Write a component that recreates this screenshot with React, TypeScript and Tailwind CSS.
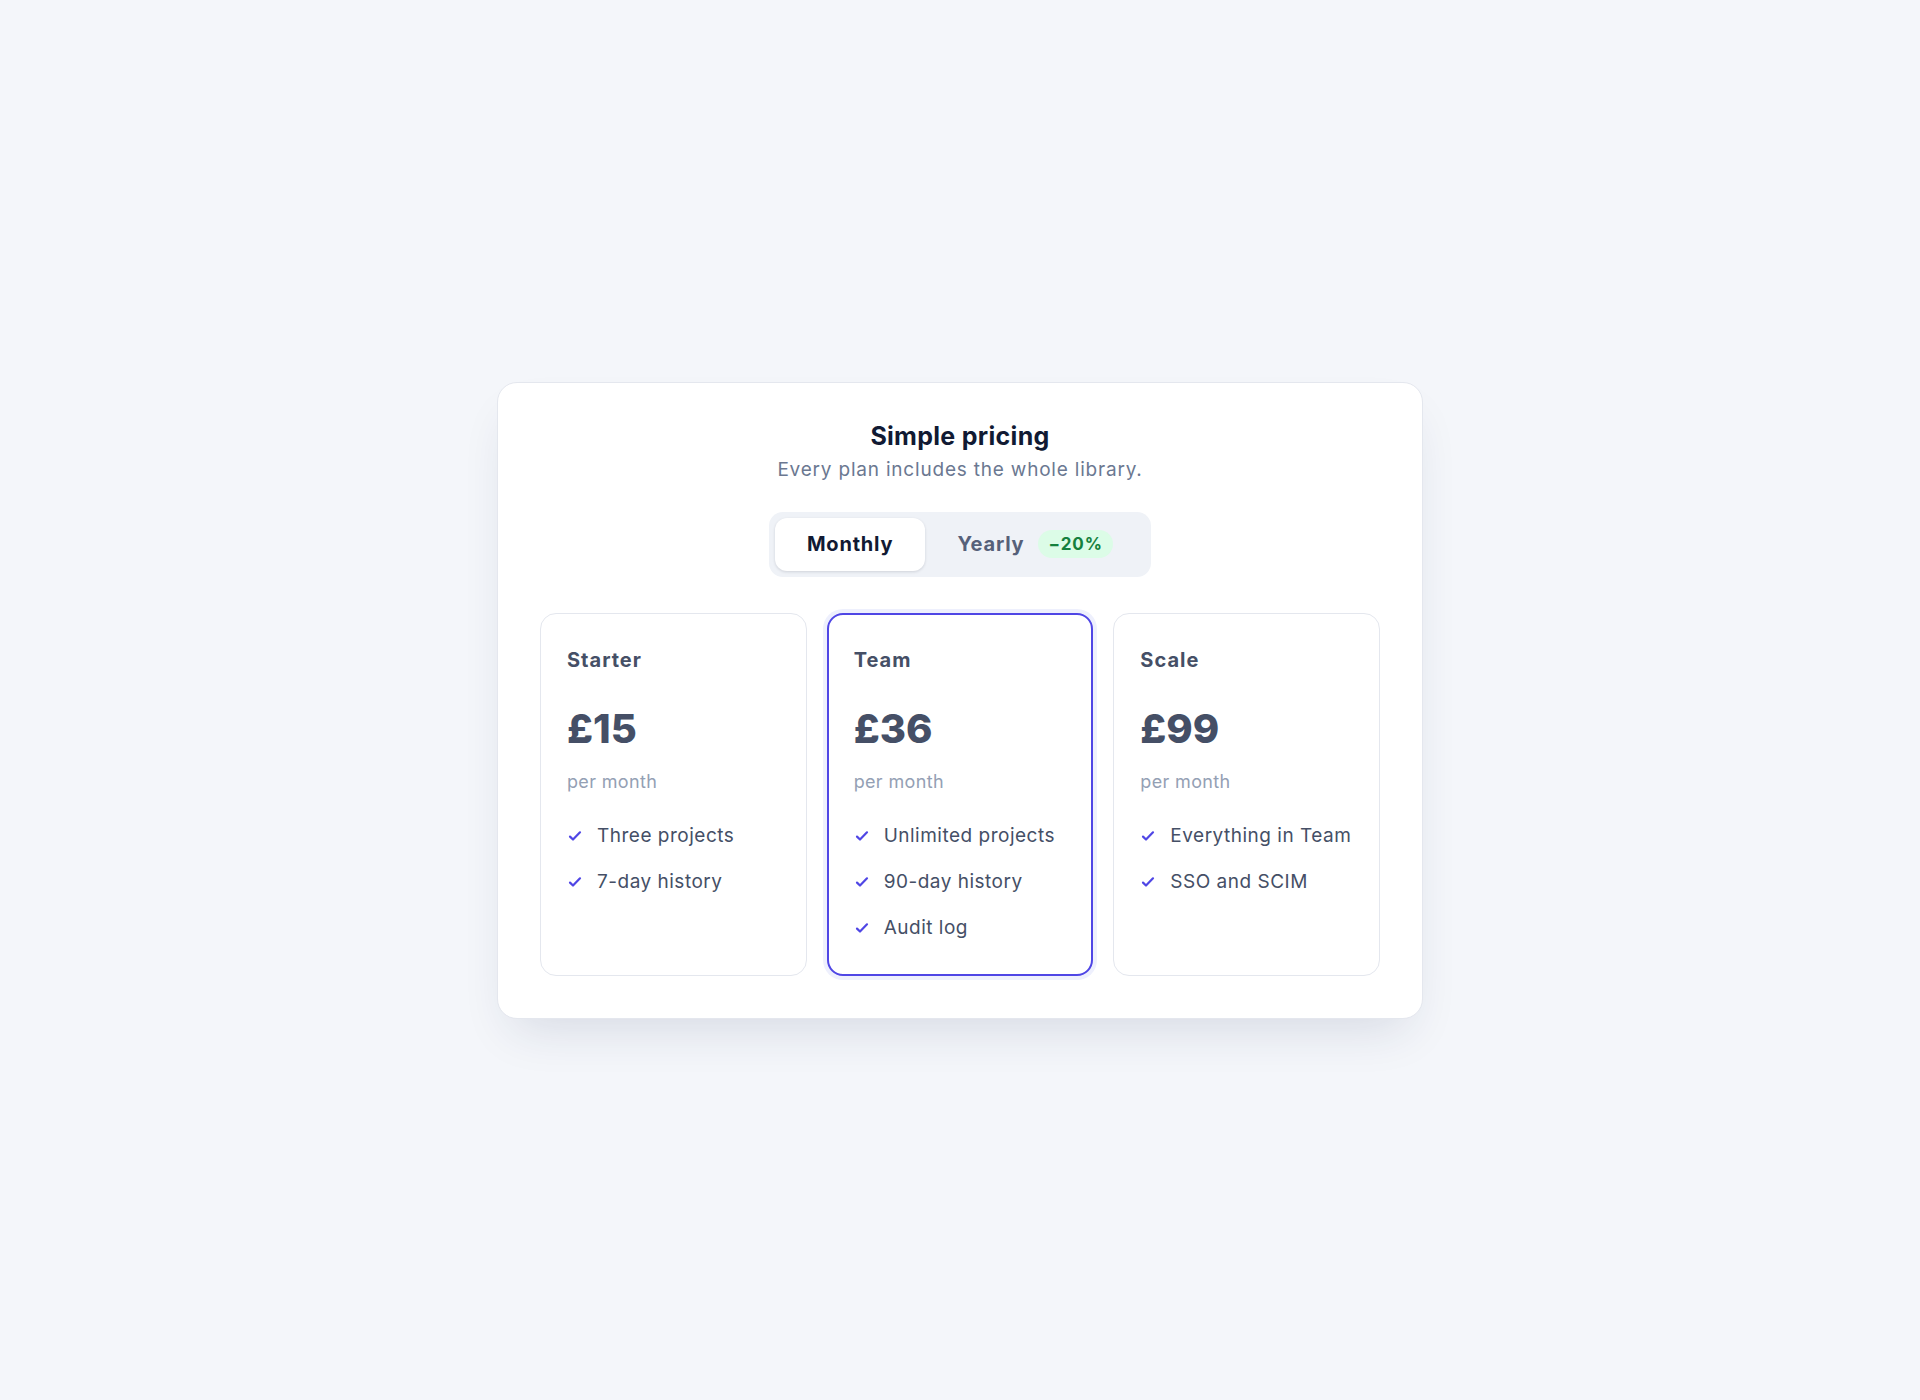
import React, { useState } from 'react';

type Plan = {
  name: string;
  monthly: number;
  features: string[];
  featured?: boolean;
};

const plans: Plan[] = [
  { name: 'Starter', monthly: 15, features: ['Three projects', '7-day history'] },
  { name: 'Team', monthly: 36, features: ['Unlimited projects', '90-day history', 'Audit log'], featured: true },
  { name: 'Scale', monthly: 99, features: ['Everything in Team', 'SSO and SCIM'] },
];

const CheckIcon = () => (
  <svg viewBox="0 0 16 16" className="h-4 w-4 shrink-0" fill="none">
    <path d="M3 8.6l3 2.9 7-7.2" stroke="#4f46e5" strokeWidth="2.2" strokeLinecap="round" strokeLinejoin="round" />
  </svg>
);

function PlanCard({ plan, yearly }: { plan: Plan; yearly: boolean }) {
  const price = yearly ? Math.round(plan.monthly * 0.8) : plan.monthly;

  return (
    <div
      className={
        plan.featured
          ? 'rounded-2xl border-2 border-[#4f46e5] bg-white px-[25px] pt-[31px] pb-8 shadow-[0_0_0_4px_#eef0fd]'
          : 'rounded-2xl border border-[#e4e7ee] bg-white px-[26px] pt-8 pb-8'
      }
    >
      <h3 className="text-[20px] leading-7 font-bold tracking-[1px] text-[#454f66]">{plan.name}</h3>
      <div className="mt-[35px] text-[40px] leading-none font-extrabold text-[#454f66]">£{price}</div>
      <p className="mt-[19px] text-[18px] leading-7 tracking-[0.35px] text-[#94a0b4]">per month</p>
      <ul className="mt-[26px] flex flex-col gap-[18px]">
        {plan.features.map((f) => (
          <li key={f} className="flex items-center gap-[14px] text-[19px] leading-7 tracking-[0.5px] text-[#454f66]">
            <CheckIcon />
            <span>{f}</span>
          </li>
        ))}
      </ul>
    </div>
  );
}

export default function App() {
  const [yearly, setYearly] = useState(false);

  return (
    <div
      className="flex min-h-screen items-center justify-center bg-[#f4f6fa]"
      style={{ fontFamily: 'Inter, "Noto Sans", sans-serif' }}
    >
      <div className="w-[926px] rounded-[20px] border border-[#e4e7ee] bg-white px-[42px] pt-[37px] pb-[42px] shadow-[0_24px_50px_-16px_rgba(30,41,82,0.14)]">
        <div className="text-center">
          <h2 className="text-[25px] leading-8 font-bold tracking-[0.3px] text-[#111a33]">Simple pricing</h2>
          <p className="mt-1 text-[19px] leading-7 tracking-[0.8px] text-[#6b7891]">Every plan includes the whole library.</p>
        </div>

        <div className="mt-7 flex justify-center">
          <div className="flex items-center rounded-[14px] bg-[#eff2f7] p-1.5">
            <button
              type="button"
              onClick={() => setYearly(false)}
              className={
                'h-[53px] rounded-xl px-8 text-[20px] font-bold tracking-[0.8px] ' +
                (yearly ? 'text-[#566079]' : 'bg-white text-[#111a33] shadow-[0_1px_3px_rgba(15,23,42,0.14)]')
              }
            >
              Monthly
            </button>
            <button
              type="button"
              onClick={() => setYearly(true)}
              className={
                'flex h-[53px] items-center gap-3.5 rounded-xl px-8 text-[20px] font-bold tracking-[0.8px] ' +
                (yearly ? 'bg-white text-[#111a33] shadow-[0_1px_3px_rgba(15,23,42,0.14)]' : 'text-[#566079]')
              }
            >
              Yearly
              <span className="rounded-full bg-[#dcfce7] px-2.5 py-0.5 text-[17px] leading-6 font-bold tracking-[1px] text-[#15803d]">
                −20%
              </span>
            </button>
          </div>
        </div>

        <div className="mt-9 grid grid-cols-3 gap-5">
          {plans.map((p) => (
            <PlanCard key={p.name} plan={p} yearly={yearly} />
          ))}
        </div>
      </div>
    </div>
  );
}
